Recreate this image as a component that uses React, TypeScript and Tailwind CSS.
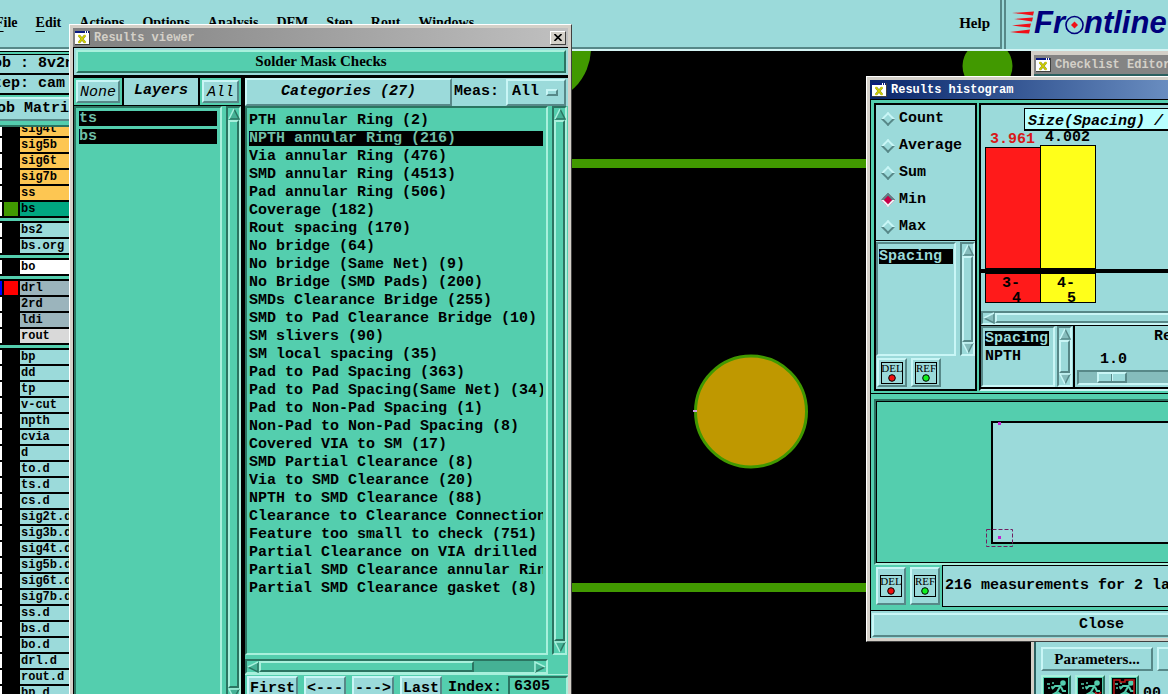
import type { ReactNode } from 'react';
import clsx from 'clsx';

const mono = "font-['Liberation_Mono',monospace]";
const serif = "font-['Liberation_Serif',serif]";

// raised and sunken frames, one pair for each of the two desktop colours
const cyanUp = 'border-2 border-t-[#c9f6f6] border-l-[#c9f6f6] border-r-[#578888] border-b-[#578888] bg-[#9bdada]';
const cyanDown = 'border-2 border-t-[#578888] border-l-[#578888] border-r-[#c9f6f6] border-b-[#c9f6f6] bg-[#9bdada]';
const tealUp = 'border-2 border-t-[#a8f0dc] border-l-[#a8f0dc] border-r-[#2b7461] border-b-[#2b7461] bg-[#54ceae]';
const tealDown = 'border-2 border-t-[#2b7461] border-l-[#2b7461] border-r-[#a8f0dc] border-b-[#a8f0dc] bg-[#54ceae]';

const menus = ['File', 'Edit', 'Actions', 'Options', 'Analysis', 'DFM', 'Step', 'Rout', 'Windows'];

type Layer = { name: string; bg?: string; swatch?: string; edge?: string };

const layerGroups: Layer[][] = [
  [
    { name: 'sig4t', bg: 'bg-[#fdc652]' },
    { name: 'sig5b', bg: 'bg-[#fdc652]' },
    { name: 'sig6t', bg: 'bg-[#fdc652]' },
    { name: 'sig7b', bg: 'bg-[#fdc652]' },
    { name: 'ss', bg: 'bg-[#fdc652]' },
    { name: 'bs', bg: 'bg-[#00a681]', swatch: 'bg-[#419900]' },
  ],
  [{ name: 'bs2' }, { name: 'bs.org' }],
  [{ name: 'bo', bg: 'bg-white' }],
  [
    { name: 'drl', bg: 'bg-[#9bb4bc]', swatch: 'bg-[#ff0000]', edge: 'bg-[#0000ff]' },
    { name: '2rd', bg: 'bg-[#9bb4bc]' },
    { name: 'ldi', bg: 'bg-[#9bb4bc]' },
    { name: 'rout', bg: 'bg-[#d9d9d9]' },
  ],
  [
    'bp', 'dd', 'tp', 'v-cut', 'npth', 'cvia', 'd', 'to.d', 'ts.d', 'cs.d', 'sig2t.d', 'sig3b.d',
    'sig4t.d', 'sig5b.d', 'sig6t.d', 'sig7b.d', 'ss.d', 'bs.d', 'bo.d', 'drl.d', 'rout.d', 'bp.d',
  ].map((name) => ({ name })),
];

const categories = [
  'PTH annular Ring (2)',
  'NPTH annular Ring (216)',
  'Via annular Ring (476)',
  'SMD annular Ring (4513)',
  'Pad annular Ring (506)',
  'Coverage (182)',
  'Rout spacing (170)',
  'No bridge (64)',
  'No bridge (Same Net) (9)',
  'No Bridge (SMD Pads) (200)',
  'SMDs Clearance Bridge (255)',
  'SMD to Pad Clearance Bridge (10)',
  'SM slivers (90)',
  'SM local spacing (35)',
  'Pad to Pad Spacing (363)',
  'Pad to Pad Spacing(Same Net) (34)',
  'Pad to Non-Pad Spacing (1)',
  'Non-Pad to Non-Pad Spacing (8)',
  'Covered VIA to SM (17)',
  'SMD Partial Clearance (8)',
  'Via to SMD Clearance (20)',
  'NPTH to SMD Clearance (88)',
  'Clearance to Clearance Connection',
  'Feature too small to check (751)',
  'Partial Clearance on VIA drilled',
  'Partial SMD Clearance annular Ring',
  'Partial SMD Clearance gasket (8)',
];

type Dir = 'up' | 'down' | 'left' | 'right';

function Arrow({ dir, teal }: { dir: Dir; teal?: boolean }) {
  const light = teal ? '#a8f0dc' : '#c9f6f6';
  const dark = teal ? '#2b7461' : '#578888';
  const face = teal ? '#45b195' : '#85bcbc';
  const shapes = {
    up: { tri: '6,1 11,11 1,11', lit: '1,11 6,1', shade: '6,1 11,11 1,11' },
    down: { tri: '1,1 11,1 6,11', lit: '6,11 1,1 11,1', shade: '11,1 6,11' },
    left: { tri: '1,6 11,1 11,11', lit: '1,6 11,1', shade: '11,1 11,11 1,6' },
    right: { tri: '1,1 11,6 1,11', lit: '1,11 1,1 11,6', shade: '11,6 1,11' },
  }[dir];
  return (
    <svg viewBox="0 0 12 12" className="size-3 shrink-0" strokeWidth="1.5" fill="none">
      <polygon points={shapes.tri} fill={face} />
      <polyline points={shapes.shade} stroke={dark} />
      <polyline points={shapes.lit} stroke={light} />
    </svg>
  );
}

function VScroll({ teal }: { teal?: boolean }) {
  return (
    <div className={clsx('flex w-[15px] shrink-0 flex-col items-center', teal ? tealDown : cyanDown)}>
      <Arrow dir="up" teal={teal} />
      <div className={clsx('w-full flex-1', teal ? tealUp : cyanUp)} />
      <Arrow dir="down" teal={teal} />
    </div>
  );
}

function XIcon() {
  return (
    <svg viewBox="0 0 15 14" className="h-[14px] w-[15px] shrink-0">
      <rect width="15" height="14" fill="#404040" />
      <rect width="14" height="13" fill="#fff" />
      <rect width="10" height="2" fill="#0a1a80" />
      <rect x="11" width="1" height="2" fill="#0a1a80" />
      <rect x="13" width="1" height="2" fill="#0a1a80" />
      <path d="M4 4.500l6 7M10 4.500l-6 7" stroke="#8a8a30" strokeWidth="2.600" />
      <path d="M3.500 4l7 8M10.500 4l-7 8" stroke="#d0d000" strokeWidth="1.600" />
    </svg>
  );
}

function TitleBar({ title, className, children }: { title: string; className: string; children?: ReactNode }) {
  return (
    <div className={clsx('flex h-[19px] shrink-0 items-center gap-1 px-0.5 text-xs font-bold', mono, className)}>
      <XIcon />
      <span className="flex-1 whitespace-pre">{title}</span>
      {children}
    </div>
  );
}

function ActionButton({ label, dot, className }: { label: string; dot: string; className: string }) {
  return (
    <button className={clsx('flex w-[30px] items-center justify-center font-normal', cyanUp, className)}>
      <span className={clsx('flex size-[22px] flex-col items-center border border-black text-[11px] leading-[11px]', serif)}>
        {label}
        <svg viewBox="0 0 8 8" className="size-2">
          <circle cx="4" cy="4" r="3.300" fill={dot} stroke="#000" />
        </svg>
      </span>
    </button>
  );
}

function Logo() {
  return (
    <div className="flex items-center font-['Liberation_Sans',sans-serif] text-[31px] leading-[31px] font-bold text-[#00007c] italic">
      <svg viewBox="0 0 24 24" className="h-6 w-6 shrink-0" fill="#f01018">
        <path d="M2 2L24 .500L23 4.500L12 3z" />
        <path d="M4 8L23 6.500L22 10.500L12 9z" />
        <path d="M2 14.500L21 12.500L20 16.500L10 15.500z" />
        <path d="M0 21L20 18.500L19 22.500L8 22z" />
      </svg>
      <span>Fr</span>
      <svg viewBox="0 0 19 20" className="mt-1 h-5 w-[19px] shrink-0">
        <circle cx="9.500" cy="10" r="8.500" fill="none" stroke="#00007c" strokeWidth="1.600" />
        <path d="M9.500 6.500L13 10l-3.500 3.500L6 10z" fill="#f01018" />
      </svg>
      <span>ntline</span>
    </div>
  );
}

function LayerPanel() {
  return (
    <aside className={clsx('flex w-[88px] shrink-0 flex-col overflow-hidden bg-[#54ceae] font-bold', mono)}>
      <div className="border-y border-black pt-0.5 text-[15px] leading-[18px] whitespace-pre">
        <div className="border-t border-b-2 border-black bg-[#9bdada]">Job : 8v2n</div>
        <div className="border-b border-black bg-[#9bdada]">Step: cam</div>
      </div>
      <div className={clsx('mt-0.5 h-6 shrink-0 px-0.5 text-[15px] leading-5 whitespace-pre', cyanUp)}>Job Matrix</div>
      <div className="h-1.5 shrink-0 border-b-2 border-[#2b7461]" />
      <div className="flex flex-1 flex-col justify-start gap-[3px] overflow-hidden">
        {layerGroups.map((group, g) => (
          <ul key={g} className={clsx('bg-black', g > 0 ? 'pt-0.5' : '-mt-[5px]')}>
            {group.map((layer) => (
              <li key={layer.name} className="flex h-4 items-start text-xs leading-[14px]">
                <span className={clsx('h-[14px] w-[18px]', layer.edge ?? 'bg-white')} />
                <span className={clsx('mx-0.5 h-[14px] w-[14px]', layer.swatch)} />
                <span className={clsx('h-[14px] flex-1 pl-px', layer.bg ?? 'bg-[#9bdada]')}>{layer.name}</span>
              </li>
            ))}
          </ul>
        ))}
      </div>
    </aside>
  );
}

function Board() {
  return (
    <svg className="h-full min-w-0 flex-1 bg-black">
      <g transform="translate(-72 -51)" fill="#419900">
        <circle cx="535" cy="48" r="56" />
        <circle cx="987.500" cy="66" r="25" />
        <rect x="0" y="159" width="2000" height="9" />
        <rect x="0" y="583" width="2000" height="9" />
        <circle cx="751" cy="411.500" r="55.500" fill="#bf9800" stroke="#419900" strokeWidth="3" />
        <rect x="693" y="410" width="4" height="2" fill="#c9a0dc" />
      </g>
    </svg>
  );
}

function ResultsViewer() {
  return (
    <section className="absolute top-6 -bottom-3 left-[69px] flex w-[503px] flex-col border border-t-white border-r-[#404040] border-b-[#404040] border-l-white bg-[#d4d0c8] p-[3px]">
      <TitleBar title="Results viewer" className="bg-gradient-to-r from-[#808080] to-[#c0c0c0] text-[#d4d0c8]">
        <button
          aria-label="Close"
          className="flex h-[14px] w-4 items-center justify-center border border-t-white border-r-[#404040] border-b-[#404040] border-l-white bg-[#d4d0c8]"
        >
          <svg viewBox="0 0 8 7" className="h-[7px] w-2">
            <path d="M.500 0l7 7M7.500 0l-7 7" stroke="#000" strokeWidth="1.600" />
          </svg>
        </button>
      </TitleBar>
      <div className="flex min-h-0 flex-1 flex-col gap-[3px] border-t border-l border-black bg-black">
        <div className="h-[27px] shrink-0 bg-[#9bdada] p-0.5">
          <h2 className={clsx('h-full text-center text-[15px] leading-[18px] font-bold', serif, tealUp)}>Solder Mask Checks</h2>
        </div>
        <div className={clsx('flex min-h-0 flex-1 gap-1 text-[15px] font-bold', mono)}>
          <div className="flex w-[167px] flex-col">
            <div className="flex h-7 shrink-0 gap-0.5 pb-px italic">
              <div className="flex bg-[#54ceae] p-0.5">
                <button className={clsx('px-0.5 font-normal', cyanUp)}>None</button>
              </div>
              <div className="flex flex-1 items-center justify-center bg-[#9bdada]">Layers</div>
              <div className="flex bg-[#54ceae] p-0.5">
                <button className={clsx('px-[3px] font-normal', cyanUp)}>All</button>
              </div>
            </div>
            <div className="flex flex-1 gap-1 bg-[#54ceae]">
              <ul className={clsx('flex flex-1 flex-col gap-[3px] p-[3px]', tealDown)}>
                {['ts', 'bs'].map((name) => (
                  <li key={name} className="flex">
                    <button className="h-[15px] flex-1 bg-black text-left leading-[15px] text-[#6fbfa8]">{name}</button>
                  </li>
                ))}
              </ul>
              <VScroll teal />
            </div>
          </div>
          <div className="flex min-w-0 flex-1 flex-col bg-[#54ceae]">
            <div className="flex h-7 shrink-0">
              <button className={clsx('w-[207px] italic', cyanUp)}>Categories (27)</button>
              <div className="flex flex-1 items-center justify-between bg-[#9bdada] px-0.5">
                <label htmlFor="meas">Meas:</label>
                <div className="relative">
                  <select id="meas" className={clsx('h-[27px] w-[60px] appearance-none pl-1', cyanUp)}>
                    <option>All</option>
                  </select>
                  <span className={clsx('pointer-events-none absolute top-2.5 right-2 h-[7px] w-3', cyanUp)} />
                </div>
              </div>
            </div>
            <div className="flex min-h-0 flex-1 gap-1 pr-px">
              <ul className={clsx('flex min-w-0 flex-1 flex-col gap-[3px] overflow-hidden pt-[5px] pr-[3px] pl-0.5', tealDown)}>
                {categories.map((name, i) => (
                  <li key={name} className="flex">
                    <button
                      className={clsx(
                        'h-[15px] flex-1 overflow-hidden text-left leading-[15px] whitespace-pre',
                        i === 1 && 'bg-black text-[#6fbfa8]',
                      )}
                    >
                      {name}
                    </button>
                  </li>
                ))}
              </ul>
              <VScroll teal />
            </div>
            <div className={clsx('mt-1 mr-5 flex h-[15px] shrink-0 items-center', tealDown)}>
              <Arrow dir="left" teal />
              <div className="flex h-full flex-1 bg-[#45b195]">
                <div className={clsx('w-[78%]', tealUp)} />
              </div>
              <Arrow dir="right" teal />
            </div>
            <div className="flex h-7 shrink-0 items-start gap-1.5 border-t border-[#a8f0dc] px-0.5 pt-px">
              {['First', '<---', '--->', 'Last'].map((name) => (
                <button key={name} className={clsx('h-6 shrink-0 px-px whitespace-pre', cyanUp)}>
                  {name}
                </button>
              ))}
              <label htmlFor="index" className="shrink-0 leading-6">
                Index:
              </label>
              <input id="index" defaultValue="6305" className={clsx('ml-auto h-6 w-[60px] px-1 pb-1', tealDown)} />
            </div>
          </div>
        </div>
      </div>
    </section>
  );
}

// running figure used on the checklist action buttons
function RunIcon({ frame, cross }: { frame?: boolean; cross?: boolean }) {
  return (
    <button aria-label="Run" className={clsx('flex size-[30px] items-center justify-center', tealUp)}>
      <svg viewBox="0 0 24 24" className="size-6 bg-black" fill="none" stroke="#54ceae" strokeWidth="2">
        <circle cx="19" cy="5" r="1.800" fill="#54ceae" />
        <path d="M17 7l-4 7M16 8h-5l-3 3M17 9l2 4h3M13 14l-5 3-5 1M13 14l5 3-2 5" />
        <path d="M3 6h3M7 9h2M4 10h2M8 5h2" strokeWidth="1.500" />
        {frame && <path d="M2 23V2h6v2h5V2h9v21" stroke="#c01818" strokeWidth="1.500" />}
        {cross && <path d="M17 14l6 6M23 14l-6 6" stroke="#c01818" strokeWidth="1.500" />}
      </svg>
    </button>
  );
}

function ChecklistEditor() {
  return (
    <section className="absolute top-[51px] -bottom-4 left-[1031px] flex w-[420px] flex-col border border-t-[#d4d0c8] border-l-[#d4d0c8] bg-[#d4d0c8] p-0.5">
      <TitleBar title="Checklist Editor" className="mt-px bg-[#848484] text-[#d4d0c8]" />
      <div className="flex flex-1 flex-col justify-end gap-1 border-2 border-[#2b6060] bg-[#9bdada] px-[5px]">
        <div className="flex gap-1">
          <button className={clsx('h-6 w-[112px] text-[15px] leading-5 font-bold', serif, cyanUp)}>Parameters...</button>
          <button aria-label="Options" className={clsx('h-6 w-[112px]', cyanUp)} />
        </div>
        <div className="flex gap-1">
          <RunIcon />
          <RunIcon cross />
          <RunIcon frame />
          <span className={clsx('pt-2 text-[15px] font-bold', mono)}>00</span>
        </div>
      </div>
    </section>
  );
}

function Bar({ value, range, fill, height, text }: { value: string; range: string[]; fill: string; height: string; text: string }) {
  return (
    <div className="-mr-px flex w-14 flex-col justify-end">
      <span className={clsx('pl-[5px] leading-[14px]', text)}>{value}</span>
      <div className={clsx('border border-black', fill, height)} />
      <div className={clsx('mt-1 flex h-[30px] flex-col border border-black pt-0.5 pl-4 leading-[15px]', fill)}>
        <span>{range[0]}</span>
        <span className="pl-2.5">{range[1]}</span>
      </div>
    </div>
  );
}

function Histogram() {
  return (
    <section className="absolute top-[76px] left-[866px] flex w-[470px] flex-col border border-t-white border-r-[#404040] border-b-[#404040] border-l-white bg-[#d4d0c8] p-[3px]">
      <TitleBar title="Results histogram" className="bg-gradient-to-r from-[#0a246a] to-[#a6caf0] text-white" />
      <div className={clsx('border-t border-l border-black bg-[#54ceae] text-[15px] font-bold', mono)}>
        <div className="flex h-[294px] gap-0.5 border-b border-black pt-[3px] pb-0.5 pl-[3px]">
          <div className="flex w-[103px] flex-col border-2 border-black bg-[#9bdada]">
            <fieldset className="flex h-[136px] flex-col border-b border-black pl-[7px]">
              {['Count', 'Average', 'Sum', 'Min', 'Max'].map((name) => (
                <label key={name} className="flex h-[27px] items-center gap-1.5 leading-[15px]">
                  <input
                    type="radio"
                    name="stat"
                    defaultChecked={name === 'Min'}
                    className="size-2.5 rotate-45 appearance-none border-2 border-t-[#c9f6f6] border-r-[#578888] border-b-[#578888] border-l-[#c9f6f6] checked:border-t-[#578888] checked:border-r-[#e8f8f8] checked:border-b-[#e8f8f8] checked:border-l-[#578888] checked:bg-[#c80048]"
                  />
                  {name}
                </label>
              ))}
            </fieldset>
            <div className="flex flex-1 gap-1 pt-px">
              <div className={clsx('flex-1 px-px py-0.5', cyanDown)}>
                <button className="h-[15px] w-full bg-black text-left leading-[15px] text-[#9bdada]">Spacing</button>
              </div>
              <VScroll />
            </div>
            <div className="flex gap-1 py-0.5 pl-px">
              <ActionButton label="DEL" dot="#f01010" className="h-[29px]" />
              <ActionButton label="REF" dot="#10f020" className="h-[29px]" />
            </div>
          </div>
          <div className="relative flex flex-1 flex-col border-2 border-r-0 border-t-black border-b-[#c9f6f6] border-l-black bg-[#9bdada]">
            <h3 className="absolute top-[3px] left-[43px] z-10 h-[23px] w-[300px] border border-b-2 border-black bg-[#b9ffff] pl-[3px] leading-[26px] font-bold whitespace-pre italic">
              Size(Spacing) / 
            </h3>
            <div className="relative flex h-[198px] shrink-0 items-end pl-1">
              <Bar value="3.961" range={['3-', '4']} fill="bg-[#ff1a1a]" height="h-[122px]" text="text-[#d81818]" />
              <Bar value="4.002" range={['4-', '5']} fill="bg-[#ffff1a]" height="h-[124px]" text="" />
              <div className="absolute bottom-[30px] left-0 h-1 w-full bg-black" />
            </div>
            <div className={clsx('mt-2 flex h-[14px] shrink-0 items-center', cyanDown)}>
              <Arrow dir="left" />
              <div className={clsx('h-full flex-1', cyanUp)} />
            </div>
            <div className="flex flex-1 border-t border-b-2 border-black">
              <div className={clsx('flex w-[74px] flex-col gap-[3px] overflow-hidden py-[3px] pr-1 pl-0.5', cyanDown)}>
                <button className="h-[15px] shrink-0 bg-black text-left leading-[15px] text-[#9bdada]">Spacing</button>
                <button className="h-[15px] shrink-0 text-left leading-[15px]">NPTH</button>
              </div>
              <div className="ml-0.5 flex">
                <VScroll />
              </div>
              <div className="ml-px flex flex-1 flex-col border-l-2 border-black pt-[3px] pl-0.5">
                <span className="pl-[77px] leading-[15px]">Re</span>
                <label htmlFor="scale" className="pt-2 pl-[23px] leading-[15px]">
                  1.0
                </label>
                <input
                  id="scale"
                  type="range"
                  defaultValue={8}
                  className={clsx(
                    'mt-[3px] h-[15px] w-full appearance-none [&::-webkit-slider-thumb]:h-[11px] [&::-webkit-slider-thumb]:w-[30px] [&::-webkit-slider-thumb]:appearance-none [&::-webkit-slider-thumb]:border-2 [&::-webkit-slider-thumb]:border-t-[#c9f6f6] [&::-webkit-slider-thumb]:border-r-[#578888] [&::-webkit-slider-thumb]:border-b-[#578888] [&::-webkit-slider-thumb]:border-l-[#c9f6f6] [&::-webkit-slider-thumb]:bg-[linear-gradient(to_right,#9bdada_12px,#578888_12px,#578888_13px,#c9f6f6_13px,#c9f6f6_14px,#9bdada_14px)]',
                    'border-2 border-t-[#578888] border-r-[#c9f6f6] border-b-[#c9f6f6] border-l-[#578888] bg-[#85bcbc]',
                  )}
                />
              </div>
            </div>
          </div>
        </div>
        <div className="pt-[5px] pl-[3px]">
          <div className={clsx('h-[166px]', tealDown)}>
            <svg className="h-full w-full border border-black" fill="none">
              <rect x="115" y="20" width="600" height="121" fill="#9bdada" stroke="#000" strokeWidth="2" />
              <rect x="121" y="20" width="3" height="3" fill="#c020d0" />
              <rect x="121" y="134" width="3" height="3" fill="#c020d0" />
              <rect x="109.500" y="127.500" width="26" height="17" stroke="#702060" strokeDasharray="4 2" />
            </svg>
          </div>
        </div>
        <div className="flex h-[46px] items-start gap-1 border-b border-black pl-[5px]">
          <ActionButton label="DEL" dot="#f01010" className="mt-0.5 h-[38px]" />
          <ActionButton label="REF" dot="#10f020" className="mt-0.5 h-[38px]" />
          <p className="-ml-0.5 h-[42px] flex-1 border border-black bg-[#9bdada] pl-0.5 leading-10 whitespace-pre">216 measurements for 2 la</p>
        </div>
        <div className="flex bg-[#9bdada] p-px pt-0.5">
          <button className={clsx('h-6 flex-1 leading-5', cyanUp)}>Close</button>
        </div>
      </div>
    </section>
  );
}

export default function App() {
  return (
    <main className="relative h-screen w-full overflow-hidden bg-black text-black">
      <div className="-ml-4 flex h-full flex-col">
        <header className="flex h-[51px] shrink-0 border-b-2 border-[#d4f4f4] bg-[#9bdada]">
          <nav className={clsx('flex flex-1 items-start gap-[18px] border-r-2 border-b-2 border-[#578888] pt-[13px] pr-2.5 pl-[11px] text-[14px] leading-5 font-bold', serif)}>
            {menus.map((name) => (
              <a key={name} href="#">
                <span className="underline underline-offset-4">{name[0]}</span>
                {name.slice(1)}
              </a>
            ))}
            <a href="#" className="ml-auto text-[15px]">
              Help
            </a>
          </nav>
          <div className="ml-0.5 w-[164px] shrink-0 overflow-hidden border-l-2 border-[#578888] pt-[7px] pl-1">
            <Logo />
          </div>
        </header>
        <div className="flex min-h-0 flex-1">
          <LayerPanel />
          <Board />
        </div>
      </div>
      <ChecklistEditor />
      <ResultsViewer />
      <Histogram />
    </main>
  );
}
